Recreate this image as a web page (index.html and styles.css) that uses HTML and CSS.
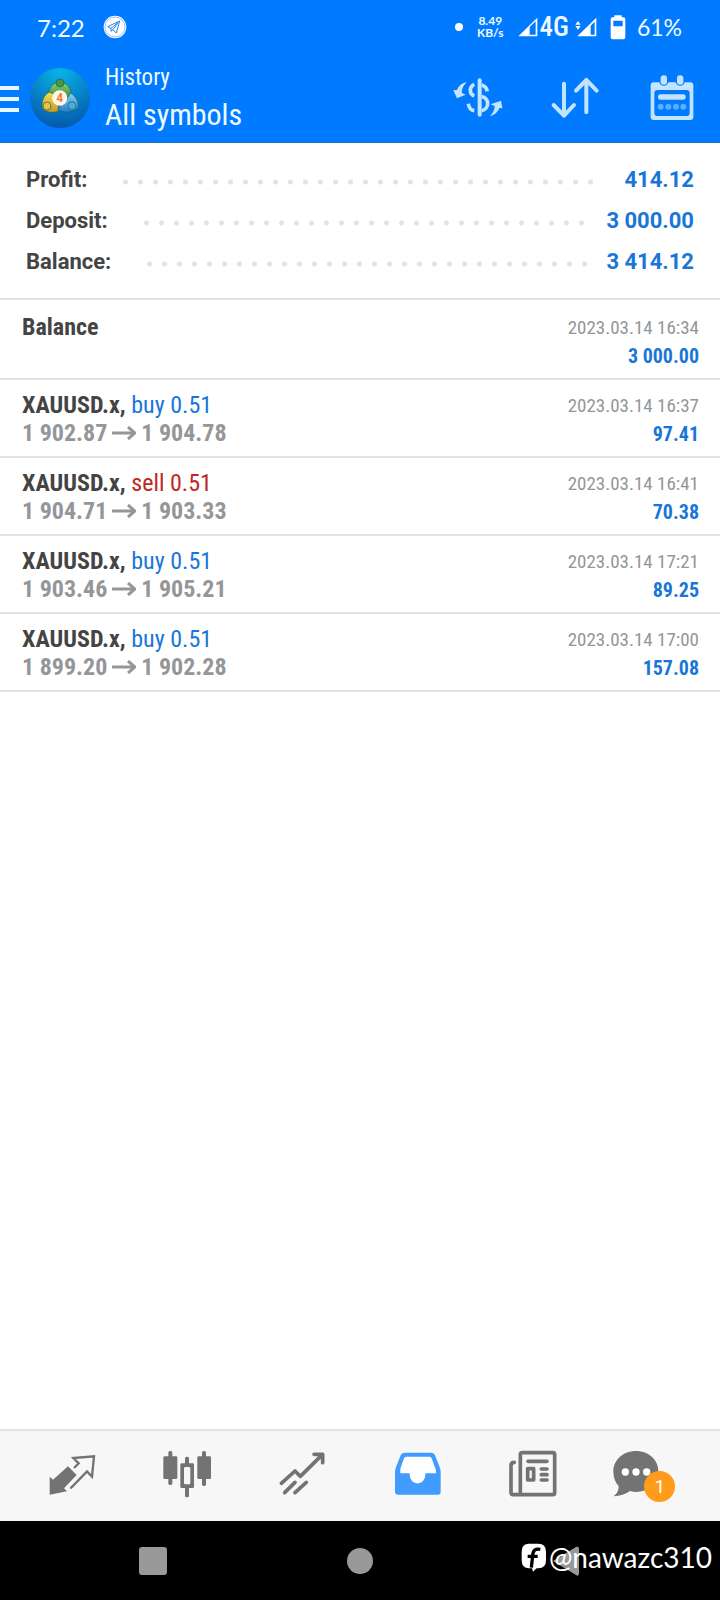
FILE: index.html
```html
<!DOCTYPE html>
<html lang="en">
<head>
<meta charset="utf-8">
<meta name="viewport" content="width=device-width, initial-scale=1">
<title>History</title>
<link rel="stylesheet" href="styles.css">
</head>
<body>
<div class="screen">
  <header class="top">
    <div class="status">
      <span class="clock">7:22</span>
      <svg class="plane" viewBox="308 43 72 72" aria-hidden="true"><circle cx="344" cy="79" r="34" fill="#fff"/><circle cx="344" cy="79" r="30" fill="none" stroke="#5fa8f5" stroke-width="2"/><path d="M322 78 358 61 348 97 338 87 332 92 332 83ZM332 83 353 66 338 87" fill="none" stroke="#2b82e8" stroke-width="3" stroke-linejoin="round"/></svg>
      <span class="dot"></span>
      <span class="speed"><span>8.49</span><span>KB/s</span></span>
      <svg class="signal" viewBox="240 50 60 60" aria-hidden="true"><path fill="#fff" fill-rule="evenodd" d="M241 108 298 52V108ZM275 80V103H293V63Z"/></svg>
      <span class="network">4G</span>
      <svg class="signal signal-data" viewBox="411 50 66 60" aria-hidden="true"><path fill="#fff" fill-rule="evenodd" d="M418 108 475 52V108ZM458 76V103H470V64ZM412 73 420 62 428 73ZM412 77H428L420 88Z"/></svg>
      <svg class="battery" viewBox="512 41 48 75" aria-hidden="true"><path fill="#fff" fill-rule="evenodd" d="M525 42H547V48H552Q558 48 558 54V108Q558 114 552 114H520Q514 114 514 108V54Q514 48 520 48H525ZM522 58V75H550V58Z"/></svg>
      <span class="percent">61%</span>
    </div>
    <div class="appbar">
      <button class="menu" type="button" aria-label="Menu"><i></i><i></i><i></i></button>
      <svg class="logo" viewBox="90 203 180 180" aria-hidden="true">
        <defs>
          <radialGradient id="sky" cx="50%" cy="5%" r="95%"><stop offset="0" stop-color="#08b4e6"/><stop offset=".5" stop-color="#0787cc"/><stop offset="1" stop-color="#0559ad"/></radialGradient>
          <linearGradient id="green" x2="0" y2="1"><stop stop-color="#8fd36a"/><stop offset="1" stop-color="#228044"/></linearGradient>
          <linearGradient id="gold" x2="0" y2="1"><stop stop-color="#f3df51"/><stop offset="1" stop-color="#c39b25"/></linearGradient>
          <linearGradient id="azure" x2="0" y2="1"><stop stop-color="#8bd2f5"/><stop offset="1" stop-color="#1f80c8"/></linearGradient>
        </defs>
        <circle cx="180" cy="293" r="90" fill="url(#sky)"/>
        <g stroke="#1b5a66" stroke-width="2" stroke-linejoin="round">
          <path fill="url(#green)" d="M146 288C144 263 157 247 180 245C203 247 217 265 213 291L196 302 180 276 162 291Z"/>
          <path fill="url(#gold)" d="M148 275C132 283 123 303 127 325C142 339 165 338 178 331L174 312 160 301 162 282Z"/>
          <path fill="url(#azure)" d="M211 278C228 287 238 306 234 323C218 338 192 339 173 328L184 308 200 298Z"/>
          <circle cx="180" cy="248" r="12" fill="#3f9a42"/>
          <circle cx="141" cy="317" r="12" fill="#e6c640"/>
          <circle cx="216" cy="316" r="12" fill="#4dabe2"/>
        </g>
        <circle cx="179" cy="293" r="23" fill="#fff5e8"/>
        <text class="logo-digit" x="179" y="306" text-anchor="middle">4</text>
      </svg>
      <div class="titles"><h1>History</h1><p>All symbols</p></div>
      <button class="action" type="button" aria-label="Currency"><svg viewBox="36 41 150 144" aria-hidden="true"><g fill="none" stroke="#c3e4ff"><path d="M116 60V163" stroke-width="12" stroke-linecap="round"/><path d="M100 72C84 79 84 101 100 107M82 130C84 143 90 150 100 151M122 74C132 77 137 82 139 93M122 109C146 113 146 146 122 151" stroke-width="11"/></g><path fill="#c3e4ff" d="M77 66C64 67 53 76 48 89L37 90 48 114 74 103 62 97C63 84 68 74 77 66ZM147 167C160 165 171 155 175 143L184 144 180 121 149 132 161 137C161 149 155 160 147 167Z"/></svg></button>
      <button class="action" type="button" aria-label="Sort"><svg viewBox="327 41 150 144" aria-hidden="true"><g fill="none" stroke="#c3e4ff" stroke-width="12" stroke-linecap="round" stroke-linejoin="round"><path d="M369 70V166M338 134 369 166 399 134"/><path d="M436 156V58M405 91 436 59 467 91"/></g></svg></button>
      <button class="action" type="button" aria-label="Period"><svg viewBox="618 41 150 144" aria-hidden="true"><path fill="#c3e4ff" fill-rule="evenodd" d="M638 66H655A14 14 0 0 0 682 66H704A14 14 0 0 0 731 66H748Q757 66 757 75V170Q757 179 748 179H638Q629 179 629 170V75Q629 66 638 66ZM650 89Q640 89 640 99V157Q640 167 650 167H736Q746 167 746 157V99Q746 89 736 89Z"/><g fill="#c3e4ff"><rect x="659" y="45" width="19" height="28" rx="9"/><rect x="708" y="45" width="19" height="28" rx="9"/><rect x="651" y="102" width="83" height="16" rx="8"/></g><g fill="#58aeff"><circle cx="659" cy="139" r="9"/><circle cx="682" cy="139" r="9"/><circle cx="705" cy="139" r="9"/><circle cx="727" cy="139" r="9"/></g></svg></button>
    </div>
  </header>

  <main class="content">
    <dl class="summary">
      <div class="sum-row"><dt>Profit:</dt><span class="leader"><i></i></span><dd>414.12</dd></div>
      <div class="sum-row"><dt>Deposit:</dt><span class="leader"><i></i></span><dd>3 000.00</dd></div>
      <div class="sum-row"><dt>Balance:</dt><span class="leader"><i></i></span><dd>3 414.12</dd></div>
    </dl>
    <ul class="deals">
      <li class="deal deal-first"><div class="left"><p class="name"><b>Balance</b></p></div><div class="right"><time>2023.03.14 16:34</time><strong>3 000.00</strong></div></li>
      <li class="deal"><div class="left"><p class="name"><b>XAUUSD.x,</b> <span class="buy">buy 0.51</span></p><p class="prices">1 902.87 <svg class="arrow" viewBox="0 0 24 14" aria-hidden="true"><path d="M0 7H23M16 1 23 7 16 13"/></svg> 1 904.78</p></div><div class="right"><time>2023.03.14 16:37</time><strong>97.41</strong></div></li>
      <li class="deal"><div class="left"><p class="name"><b>XAUUSD.x,</b> <span class="sell">sell 0.51</span></p><p class="prices">1 904.71 <svg class="arrow" viewBox="0 0 24 14" aria-hidden="true"><path d="M0 7H23M16 1 23 7 16 13"/></svg> 1 903.33</p></div><div class="right"><time>2023.03.14 16:41</time><strong>70.38</strong></div></li>
      <li class="deal"><div class="left"><p class="name"><b>XAUUSD.x,</b> <span class="buy">buy 0.51</span></p><p class="prices">1 903.46 <svg class="arrow" viewBox="0 0 24 14" aria-hidden="true"><path d="M0 7H23M16 1 23 7 16 13"/></svg> 1 905.21</p></div><div class="right"><time>2023.03.14 17:21</time><strong>89.25</strong></div></li>
      <li class="deal"><div class="left"><p class="name"><b>XAUUSD.x,</b> <span class="buy">buy 0.51</span></p><p class="prices">1 899.20 <svg class="arrow" viewBox="0 0 24 14" aria-hidden="true"><path d="M0 7H23M16 1 23 7 16 13"/></svg> 1 902.28</p></div><div class="right"><time>2023.03.14 17:00</time><strong>157.08</strong></div></li>
    </ul>
  </main>

  <nav class="tabs">
    <button class="tab" type="button" aria-label="Quotes"><svg viewBox="145 91 144 144" aria-hidden="true"><path fill="#737373" d="M205 140 231 166 193 206 202 215 150 225V171L160 180Z"/><path fill="none" stroke="#737373" stroke-width="7" d="M211 204H215L262 155 277 171 283 110 221 115 237 131 223 145"/></svg></button>
    <button class="tab" type="button" aria-label="Charts"><svg viewBox="490 91 144 144" aria-hidden="true"><g fill="#737373"><rect x="506" y="94" width="12" height="102" rx="5"/><rect x="491" y="110" width="42" height="68" rx="4"/><rect x="607" y="94" width="12" height="105" rx="5"/><rect x="593" y="110" width="41" height="68" rx="4"/><rect x="556" y="111" width="12" height="122" rx="5"/><rect x="542" y="131" width="41" height="74" rx="4"/></g><rect x="553" y="142" width="19" height="52" rx="4" fill="#f7f7f7"/></svg></button>
    <button class="tab" type="button" aria-label="Trade"><svg viewBox="115 91 144 144" aria-hidden="true"><g fill="none" stroke="#737373" stroke-width="11" stroke-linecap="round" stroke-linejoin="round"><path d="M125 191 166 154 182 170 245 108M223 104H249V129M135 219 166 188M166 219 200 188"/></g><path fill="#737373" d="M232 102H252V122Z"/></svg></button>
    <button class="tab" type="button" aria-label="History" aria-current="page"><svg viewBox="461 91 144 144" aria-hidden="true"><path fill="#fff" d="M492 105H573L590 165H475Z"/><circle cx="532" cy="167" r="23" fill="#fff"/><path fill="#429bff" fill-rule="evenodd" d="M492 99H573Q581 99 584 107L598 142Q601 150 601 158V216Q601 225 592 225H474Q464 225 464 216V158Q464 150 467 142L481 107Q484 99 492 99ZM498 111Q493 111 491 116L480 147V161H508V166A23 25 0 0 0 555 166V161H587V152L574 116Q572 111 567 111Z"/></svg></button>
    <button class="tab" type="button" aria-label="News"><svg viewBox="88 91 144 144" aria-hidden="true"><g fill="none" stroke="#737373" stroke-width="11" stroke-linecap="round" stroke-linejoin="round"><rect x="122" y="99" width="103" height="126" rx="6"/><path d="M104 128Q94 128 94 138V218Q94 225 101 225H122M145 125H202M185 148H202M185 165H202M185 181H202"/><rect x="144" y="147" width="18" height="34"/></g></svg></button>
    <button class="tab" type="button" aria-label="Messages"><span class="chat"><svg viewBox="396 91 216 144" aria-hidden="true"><path fill="#737373" d="M468 94C505 94 535 119 535 155C535 192 505 217 468 217Q459 217 450 214Q430 229 401 230Q417 217 416 199C406 188 400 174 400 156C400 119 431 94 468 94Z"/><g fill="#fff"><circle cx="436" cy="157" r="11"/><circle cx="468" cy="157" r="11"/><circle cx="500" cy="157" r="11"/></g></svg><span class="badge">1</span></span></button>
  </nav>

  <footer class="system">
    <button class="key" type="button" aria-label="Recent apps"><svg viewBox="0 0 30 30" aria-hidden="true"><rect x="1" y="1" width="28" height="28" rx="3"/></svg></button>
    <button class="key" type="button" aria-label="Home"><svg viewBox="0 0 30 30" aria-hidden="true"><circle cx="15" cy="15" r="13"/></svg></button>
    <button class="key" type="button" aria-label="Back"><svg viewBox="0 0 30 30" aria-hidden="true"><path d="M1 15 24 1Q27 0 27 3V27Q27 31 24 29Z"/></svg></button>
    <div class="credit"><svg viewBox="126 370 78 87" aria-hidden="true"><path fill="#fff" d="M150 372H178Q201 372 201 396V422Q201 446 178 446H173L162 456 159 446H150Q128 446 128 422V396Q128 372 150 372Z"/><path d="M184 389Q162 384 161 408L157 444M146 410H176" fill="none" stroke="#000" stroke-width="10"/></svg><span>@nawazc310</span></div>
  </footer>
</div>
</body>
</html>
```
FILE: styles.css
```css
* { box-sizing: border-box; }
body { margin: 0; background: #fff; font-family: Roboto, sans-serif; }
h1, p, dl, dd, ul { margin: 0; padding: 0; }
button { margin: 0; padding: 0; border: 0; background: none; font: inherit; cursor: pointer; }
svg { display: block; }

.screen { display: flex; flex-direction: column; min-height: 100vh; }

.top { background: #007aff; color: #effaff; border-bottom: 1px solid #1872c4; }
.status { display: flex; align-items: center; height: 54px; padding: 0 38px 0 37px; font-family: Lato, sans-serif; }
.clock { font-size: 24px; }
.plane { width: 24px; height: 24px; margin-left: 18px; }
.dot { width: 8px; height: 8px; margin-left: auto; border-radius: 50%; background: #fff; }
.speed { display: flex; flex-direction: column; margin-left: 14px; font-size: 12px; line-height: 12px; font-weight: 700; text-align: center; }
.signal { width: 20px; height: 20px; margin-left: 14px; }
.network { margin-left: 2px; font-family: "Roboto Condensed", "Liberation Sans Narrow", Roboto, sans-serif; font-size: 27px; font-weight: 500; }
.signal-data { width: 22px; margin-left: 6px; }
.battery { width: 16px; height: 25px; margin-left: 13px; }
.percent { margin-left: 11px; font-size: 23px; }

.appbar { display: flex; align-items: center; height: 88px; }
.menu { display: flex; flex-direction: column; gap: 7px; width: 19px; padding-top: 2px; }
.menu i { height: 4px; background: #e8f6ff; }
.logo { width: 60px; height: 60px; margin-left: 11px; }
.logo-digit { font: 700 36px Roboto, sans-serif; fill: #f27c2c; }
.titles { flex: 1; margin-left: 15px; padding-top: 2px; font-family: "Roboto Condensed", "Liberation Sans Narrow", Roboto, sans-serif; }
.titles h1 { font-size: 23px; line-height: 32px; font-weight: 400; }
.titles p { font-size: 30px; line-height: 42px; }
.action { display: flex; justify-content: center; width: 97px; }
.action svg { width: 50px; height: 48px; }

.content { flex: 1; }
.summary { padding: 16px 26px; border-bottom: 2px solid #e3e3e3; }
.sum-row { display: flex; align-items: center; height: 41px; font-size: 22px; font-weight: 700; }
.sum-row dt { color: #444; }
.sum-row dd { color: #1976d8; }
.leader { flex: 1; margin: 5px 13px 0 31px; }
.leader i { display: block; width: round(down, 100%, 15px); height: 6px; background: radial-gradient(circle, #e3e3e3 2px, transparent 3px) 0 0 / 15px 6px repeat-x; }

.deals { list-style: none; font-family: "Roboto Condensed", "Liberation Sans Narrow", Roboto, sans-serif; }
.deal { display: flex; justify-content: space-between; height: 78px; padding: 11px 21px 0 22px; border-bottom: 2px solid #e3e3e3; }
.deal-first { height: 80px; padding-top: 13px; }
.name, .prices { font-size: 24px; line-height: 28px; white-space: nowrap; }
.name b { color: #444; }
.prices { display: flex; align-items: center; gap: 5px; font-weight: 700; color: #949699; }
.arrow { width: 24px; height: 14px; fill: none; stroke: #949699; stroke-width: 3; }
.buy { color: #1976d8; }
.sell { color: #c02626; }
.right { display: flex; flex-direction: column; align-items: flex-end; padding-top: 1px; font-size: 20px; line-height: 28px; }
.right time { font-size: 19px; color: #949699; }
.right strong { color: #1976d8; }

.tabs { display: flex; align-items: center; height: 92px; padding: 0 14px 4px; background: #f7f7f7; border-top: 2px solid #e3e3e3; }
.tab { flex: 1; display: flex; justify-content: center; }
.tab svg { width: 48px; height: 48px; }
.chat { position: relative; }
.chat .badge { position: absolute; left: 32px; top: 21px; width: 31px; height: 31px; border-radius: 50%; background: #ff9c1a; color: #fff; font-size: 19px; line-height: 31px; text-align: center; }
.chat svg { width: 72px; }

.system { position: relative; display: flex; align-items: center; height: 79px; padding: 0 50px; background: #000; }
.key { flex: 1; display: flex; justify-content: center; }
.key svg { width: 30px; height: 30px; fill: #999; }
.credit { position: absolute; right: 8px; top: 19px; display: flex; align-items: center; gap: 2px; color: #fff; font-family: Lato, sans-serif; font-size: 28px; line-height: 34px; }
.credit svg { width: 26px; height: 29px; }
```
